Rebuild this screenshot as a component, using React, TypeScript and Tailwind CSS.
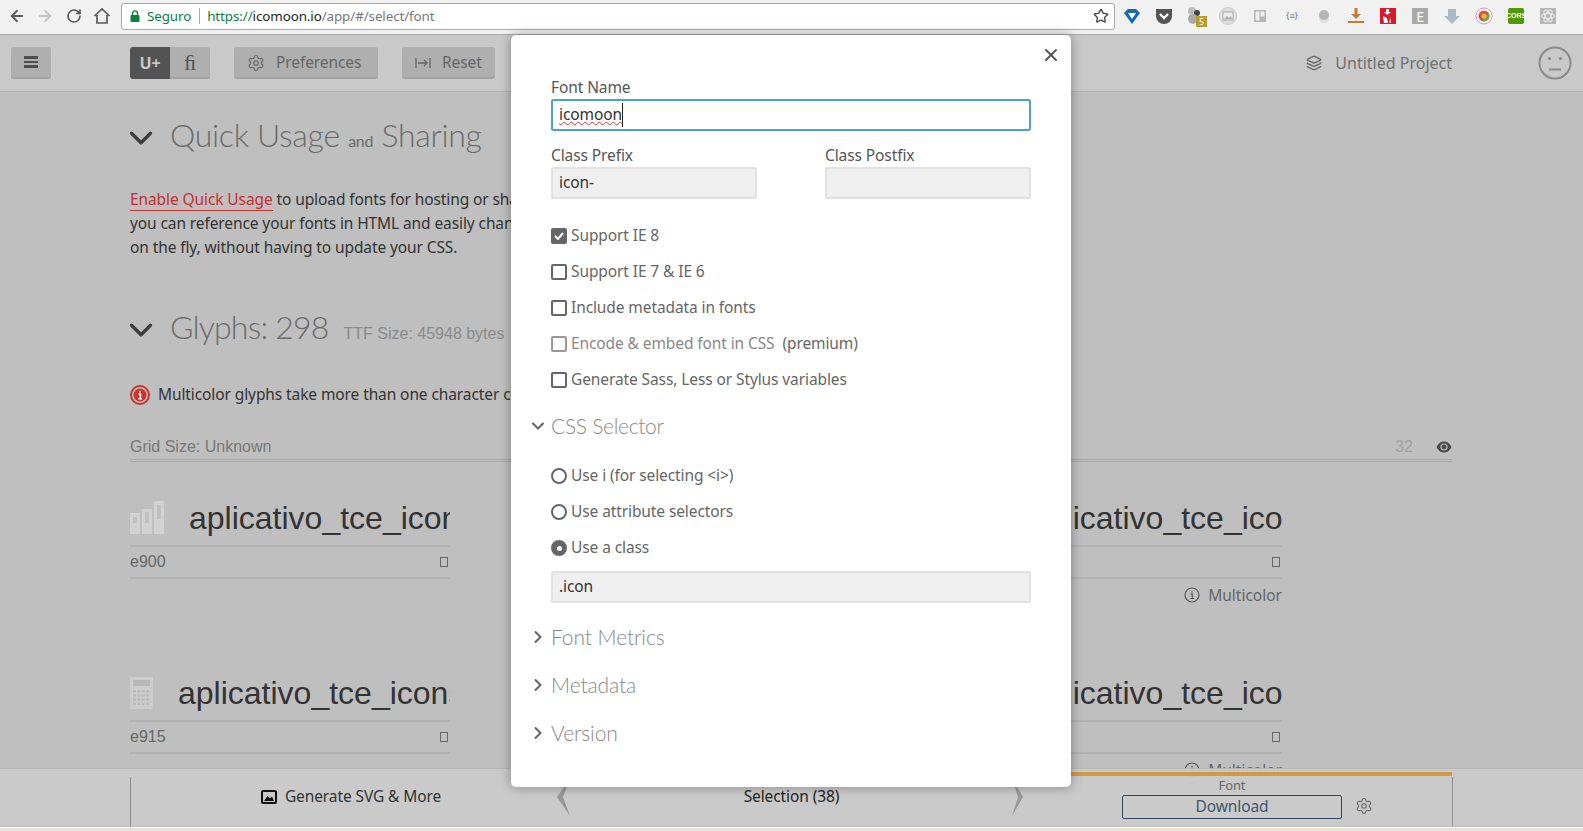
import React, { FC, ReactNode } from "react";
import { ChevronDown, ChevronRight, Layers, Settings, X, ArrowLeft, ArrowRight, RotateCw, Star } from "lucide-react";

const ui = "font-['Noto_Sans',sans-serif] tracking-[-0.1px]";
const title = "font-['Lato',sans-serif] font-light";
const arial = "font-['Liberation_Sans',Arial,sans-serif]";

const ToolButton: FC<{ icon: ReactNode; label: string; className: string }> = ({ icon, label, className }) => (
  <div className={`flex h-[32px] items-center gap-[11px] rounded-[3px] border-b-2 border-[#a2a2a2] bg-[#afafaf] pl-[13px] pt-[2px] text-[15.5px] text-[#666666] ${className}`}>
    {icon}
    <span>{label}</span>
  </div>
);

const ExtensionIcons: FC = () => (
  <div className="ml-[7px] flex items-center gap-[12px]">
    <svg width="20" height="20" viewBox="0 0 20 20">
      <path d="M2 7 L6 3 H14 L18 7 L10 18 Z" fill="#1668b8" />
      <path d="M6 7 H14 L10 13 Z" fill="#ffffff" />
    </svg>
    <svg width="20" height="20" viewBox="0 0 20 20">
      <path d="M2 3 H18 V10 A8 8 0 0 1 2 10 Z" fill="#555555" />
      <path d="M6 8 L10 12 L14 8" stroke="#ffffff" strokeWidth="2.4" fill="none" />
    </svg>
    <div className="relative h-[20px] w-[20px]">
      <div className="absolute left-[2px] top-[1px] h-[8px] w-[8px] rounded-full bg-[#bdbdbd]" />
      <div className="absolute left-[8px] top-[4px] h-[6px] w-[6px] rounded-full bg-[#444444]" />
      <div className="absolute left-[2px] top-[8px] h-[10px] w-[10px] rounded-full bg-[#aaaaaa]" />
      <div className={`absolute left-[10px] top-[10px] h-[11px] w-[11px] bg-[#b89b2a] text-center text-[9px] leading-[11px] text-white ${ui}`}>5</div>
    </div>
    <svg width="20" height="20" viewBox="0 0 20 20">
      <circle cx="10" cy="10" r="8.5" fill="#dddddd" stroke="#cccccc" />
      <rect x="5" y="6" width="10" height="8" fill="#eeeeee" stroke="#aaaaaa" />
      <path d="M6 13 L9 10 L11 12 L13 10 L14 13 Z" fill="#aaaaaa" />
    </svg>
    <svg width="20" height="20" viewBox="0 0 20 20">
      <rect x="4" y="4" width="12" height="12" fill="#b5b5b5" />
      <rect x="5.5" y="5.5" width="4" height="9" fill="#eeeeee" />
      <rect x="10.5" y="5.5" width="4" height="5" fill="#eeeeee" />
    </svg>
    <div className={`w-[20px] text-center text-[9px] leading-[20px] text-[#777777] ${ui}`}>{"{≡}"}</div>
    <svg width="20" height="20" viewBox="0 0 20 20">
      <ellipse cx="10" cy="13" rx="5" ry="4" fill="#dddddd" />
      <circle cx="10" cy="9" r="5" fill="#b5b5b5" />
    </svg>
    <svg width="20" height="20" viewBox="0 0 20 20">
      <path d="M8.5 2 H11.5 V8 H15 L10 13 L5 8 H8.5 Z" fill="#c47a36" />
      <rect x="2" y="15" width="16" height="2" fill="#c47a36" />
    </svg>
    <svg width="20" height="20" viewBox="0 0 20 20">
      <rect x="2" y="2" width="16" height="16" fill="#d8182b" />
      <path d="M8 3 H11 V6 H13 L9.5 9 L6 6 H8 Z M5 10 L9 12 L10 17 H6 Z M12 11 L13 17 H11.5 Z" fill="#ffffff" />
    </svg>
    <div className={`mx-[2px] flex h-[16px] w-[16px] items-center justify-center bg-[#a9a9a9] text-[14px] text-white ${ui}`}>E</div>
    <svg width="20" height="20" viewBox="0 0 20 20">
      <path d="M6 3 H14 V10 H18 L10 18 L2 10 H6 Z" fill="#a7bcc6" />
    </svg>
    <svg width="20" height="20" viewBox="0 0 20 20">
      <circle cx="10" cy="10" r="8" fill="#ffffff" stroke="#d88fc0" />
      <circle cx="10" cy="10" r="5.5" fill="#e0503a" />
      <path d="M10 10 L15 8 A5.5 5.5 0 0 1 8 15 Z" fill="#6ba84f" />
      <circle cx="10" cy="10" r="2.5" fill="#e8b93b" />
    </svg>
    <div className={`mx-[2px] flex h-[16px] w-[16px] items-center justify-center rounded-[2px] bg-[#4d9a06] text-[7px] font-bold text-white ${arial}`}>CORS</div>
    <svg width="20" height="20" viewBox="0 0 20 20">
      <rect x="2" y="2" width="16" height="16" fill="#b5b5b5" />
      <g stroke="#eeeeee" fill="none">
        <ellipse cx="10" cy="10" rx="6.5" ry="2.6" />
        <ellipse cx="10" cy="10" rx="6.5" ry="2.6" transform="rotate(60 10 10)" />
        <ellipse cx="10" cy="10" rx="6.5" ry="2.6" transform="rotate(120 10 10)" />
      </g>
    </svg>
  </div>
);

const ChromeBar: FC = () => (
  <div className="flex h-[35px] items-center border-b border-[#a8a8a8] bg-[#f1f1f1] pb-[2px] pl-[8px]">
    <ArrowLeft size={18} strokeWidth={2.5} className="text-[#5a5a5a]" />
    <ArrowRight size={18} strokeWidth={2.5} className="ml-[10px] text-[#c4c4c4]" />
    <RotateCw size={16} strokeWidth={2.5} className="ml-[12px] text-[#5a5a5a]" />
    <svg width="18" height="18" viewBox="0 0 18 18" className="ml-[11px]" fill="none" stroke="#5a5a5a" strokeWidth="1.7">
      <path d="M1.5 9 L9 2 L16.5 9" />
      <path d="M4 8 V16 H14 V8" />
    </svg>
    <div className="ml-[10px] flex h-[27px] w-[994px] items-center rounded-[3px] border border-[#a9a9a9] bg-white pl-[8px] pr-[5px]">
      <svg width="10" height="12" viewBox="0 0 10 12">
        <path d="M2.5 5 V3.4 A2.5 2.5 0 0 1 7.5 3.4 V5" fill="none" stroke="#0b8043" strokeWidth="1.4" />
        <rect x="0.5" y="5" width="9" height="7" rx="1" fill="#0b8043" />
      </svg>
      <span className={`ml-[7px] text-[13.4px] text-[#0b8043] ${ui}`}>Seguro</span>
      <span className="ml-[8px] h-[16px] w-px bg-[#aaaaaa]" />
      <span className={`ml-[7px] text-[13.4px] text-[#777777] ${ui}`}>
        <span className="text-[#0b8043]">https://</span>
        <span className="text-[#222222]">icomoon.io</span>/app/#/select/font
      </span>
      <Star size={16} strokeWidth={2} className="ml-auto text-[#444444]" />
    </div>
    <ExtensionIcons />
  </div>
);

const AppHeader: FC = () => (
  <div className={`flex h-[57px] items-center border-b border-[#b4b4b4] bg-[#c9c9c9] pl-[11px] ${ui}`}>
    <div className="flex h-[32px] w-[40px] flex-col items-center justify-center gap-[2px] rounded-[3px] border-b-2 border-[#a2a2a2] bg-[#afafaf]">
      <span className="h-[2.5px] w-[14px] bg-[#4e4e4e]" />
      <span className="h-[2.5px] w-[14px] bg-[#4e4e4e]" />
      <span className="h-[2.5px] w-[14px] bg-[#4e4e4e]" />
    </div>
    <div className="ml-[79px] flex h-[32px] w-[80px] overflow-hidden rounded-[3px]">
      <div className="flex w-[40px] items-center justify-center bg-[#535353] text-[16px] font-bold text-[#c9c9c9]">U+</div>
      <div className="flex w-[40px] items-center justify-center border-b-2 border-[#a2a2a2] bg-[#afafaf] font-['Liberation_Serif',serif] text-[22px] text-[#555555]">ﬁ</div>
    </div>
    <ToolButton className="ml-[24px] w-[144px]" label="Preferences" icon={<Settings size={18} strokeWidth={1.5} />} />
    <ToolButton
      className="ml-[24px] w-[93px]"
      label="Reset"
      icon={
        <svg width="16" height="12" viewBox="0 0 16 12" fill="none" stroke="#666666" strokeWidth="1.3">
          <path d="M1 1 V11 M15 1 V11 M3 6 H12 M9 3 L12 6 L9 9" />
        </svg>
      }
    />
    <div className="ml-auto flex items-center text-[16px] tracking-normal text-[#707070]">
      <Layers size={16} strokeWidth={2} className="text-[#666666]" />
      <span className="ml-[13px]">Untitled Project</span>
    </div>
    <svg width="34" height="34" viewBox="0 0 34 34" fill="none" stroke="#8a8a8a" strokeWidth="2" className="ml-[86px] mr-[11px]">
      <circle cx="17" cy="17" r="15.5" />
      <circle cx="11.5" cy="12.5" r="1.6" fill="#8a8a8a" stroke="none" />
      <circle cx="22.5" cy="12.5" r="1.6" fill="#8a8a8a" stroke="none" />
      <path d="M11 23.5 H23" />
    </svg>
  </div>
);

const SectionHeading: FC<{ children: ReactNode; className: string }> = ({ children, className }) => (
  <div className={`flex h-[40px] items-center ${className}`}>
    <ChevronDown size={38} strokeWidth={2.1} className="-ml-[8px] text-[#3d3d3d]" />
    <div className={`ml-[10px] whitespace-nowrap text-[32px] leading-[40px] tracking-[-0.3px] text-[#6b6b6b] ${title}`}>{children}</div>
  </div>
);

const BarsGlyph: FC = () => (
  <svg width="34" height="33" viewBox="0 0 34 33">
    <rect x="0" y="12" width="10" height="21" fill="#d2d2d2" />
    <rect x="12" y="8" width="10" height="25" fill="#d2d2d2" />
    <rect x="24" y="0" width="10" height="33" fill="#d2d2d2" />
    <rect x="3" y="16" width="4" height="6" fill="#bfbfbf" />
    <rect x="15" y="11" width="4" height="11" fill="#bfbfbf" />
    <rect x="27" y="4" width="4" height="14" fill="#bfbfbf" />
  </svg>
);

const CalcGlyph: FC = () => (
  <svg width="23" height="32" viewBox="0 0 23 32">
    <rect width="23" height="32" rx="1" fill="#cdcdcd" />
    <rect x="3" y="3" width="17" height="6" fill="#b8b8b8" />
    {[0, 1, 2, 3].map((r) =>
      [0, 1, 2, 3].map((c) => <rect key={`${r}-${c}`} x={3 + c * 4.4} y={13 + r * 4.2} width="3" height="2.5" fill="#bababa" />),
    )}
  </svg>
);

const GlyphCell: FC<{ icon?: ReactNode; code?: string; pad: string; height?: string; multicolor?: boolean; name?: string }> = ({ icon, code, pad, height, multicolor, name }) => (
  <div className={`w-[320px] ${height ?? ""}`}>
    <div className={`flex h-[57px] items-center overflow-hidden border-b-[2px] border-[#b2b2b2] whitespace-nowrap ${arial}`}>
      {icon && <div className="w-0 overflow-visible">{icon}</div>}
      <span className={`text-[32px] text-[#333333] ${pad}`}>{name ?? "aplicativo_tce_icons-01"}</span>
    </div>
    <div className={`flex h-[32px] items-center justify-between border-b-[2px] border-[#b2b2b2] text-[16px] text-[#666666] ${arial}`}>
      <span>{code}</span>
      <span className="mr-[2px] h-[10px] w-[8px] border border-[#666666]" />
    </div>
    {multicolor && (
      <div className={`flex h-[32px] items-center justify-end gap-[8px] text-[15.5px] tracking-normal text-[#666666] ${ui}`}>
        <svg width="16" height="16" viewBox="0 0 16 16" fill="none" stroke="#555555" strokeWidth="1.2">
          <circle cx="8" cy="8" r="7" />
          <path d="M8 4 V5.5 M6.5 7.2 H8.3 V11.5 M6.5 11.5 H10" />
        </svg>
        Multicolor
      </div>
    )}
  </div>
);

const MainContent: FC = () => (
  <div className="h-full overflow-hidden bg-[#bfbfbf] pl-[130px] pr-[131px]">
    <SectionHeading className="mt-[26px]">
      Quick Usage <span className="text-[16px] font-normal">and</span> Sharing
    </SectionHeading>
    <p className={`mt-[29px] w-[600px] text-[15.5px] leading-[24px] text-[#333333] ${ui}`}>
      <span className="border-b border-[#cc3333] text-[#c62f2f]">Enable Quick Usage</span> to upload fonts for hosting or sharing. Then
      <br />
      you can reference your fonts in HTML and easily change
      <br />
      on the fly, without having to update your CSS.
    </p>
    <SectionHeading className="mt-[51px]">
      <span className="tracking-[-0.8px]">Glyphs: 298</span>
      <span className={`ml-[15px] text-[16px] font-normal tracking-normal text-[#8a8a8a] ${arial}`}>TTF Size: 45948 bytes</span>
    </SectionHeading>
    <div className={`mt-[33px] flex items-center text-[15.5px] text-[#333333] ${ui}`}>
      <svg width="20" height="20" viewBox="0 0 20 20">
        <circle cx="10" cy="10" r="9" fill="none" stroke="#c9332b" strokeWidth="2" />
        <circle cx="10" cy="10" r="6.5" fill="#c9332b" />
        <path d="M10 5.8 V7.4 M8.4 9 H10.4 V13.6 M8.4 13.8 H12" stroke="#ffffff" strokeWidth="1.6" fill="none" />
      </svg>
      <span className="ml-[8px] whitespace-nowrap">Multicolor glyphs take more than one character code</span>
    </div>
    <div className={`mt-[28px] flex h-[28px] items-center justify-between border-b-[3px] border-double border-[#a8a8a8] text-[16px] text-[#777777] ${arial}`}>
      <span>Grid Size: Unknown</span>
      <span className="flex items-center">
        <span className="text-[#a2a2a2]">32</span>
        <svg width="16" height="12" viewBox="0 0 16 12" className="ml-[23px]">
          <path d="M0.5 6 C3 1.5 5.5 0.5 8 0.5 C10.5 0.5 13 1.5 15.5 6 C13 10.5 10.5 11.5 8 11.5 C5.5 11.5 3 10.5 0.5 6 Z" fill="#4a4a4a" />
          <circle cx="8" cy="6" r="3.6" fill="#bfbfbf" />
          <circle cx="8" cy="6" r="2.4" fill="#4a4a4a" />
        </svg>
      </span>
    </div>
    <div className="mt-[28px] grid grid-cols-[320px_320px_320px] gap-x-[96px] gap-y-[50px]">
      <GlyphCell icon={<BarsGlyph />} code="e900" pad="ml-[59px]" height="h-[125px]" />
      <GlyphCell code="e901" pad="" height="h-[125px]" />
      <GlyphCell code="" pad="ml-[68px]" multicolor height="h-[125px]" name="aplicativo_tce_ico" />
      <GlyphCell icon={<CalcGlyph />} code="e915" pad="ml-[48px]" />
      <GlyphCell code="e916" pad="" />
      <GlyphCell code="" pad="ml-[68px]" multicolor name="aplicativo_tce_ico" />
    </div>
  </div>
);

const BottomBar: FC = () => (
  <div className={`absolute bottom-[5px] left-0 right-0 h-[58px] border-t border-[#b4b4b4] bg-[#cacaca]/95 px-[130px] pt-[8px] ${ui}`}>
    <div className="flex h-full border-x border-[#8f8f8f]">
      <div className="flex w-[382px] items-center justify-center gap-[8px] pb-[10px] pl-[58px] text-[15.5px] text-[#333333]">
        <svg width="16" height="14" viewBox="0 0 16 14">
          <rect x="1" y="1" width="14" height="12" rx="1" fill="none" stroke="#111111" strokeWidth="2" />
          <path d="M3 11 L6.5 6 L9 8.5 L11 6.5 L13 11 Z" fill="#111111" />
        </svg>
        Generate SVG &amp; More
      </div>
      <div className="flex flex-1 justify-center pt-[8px] text-[15.5px] text-[#222222]">Selection (38)</div>
      <div className="relative flex w-[382px] flex-col">
        <div className="absolute -top-[5px] left-0 right-0 h-[4px] bg-[#cf9a42]" />
        <div className="ml-[52px] w-[220px] text-center text-[13px] leading-[16px] text-[#666666]">Font</div>
        <div className="mt-[2px] flex w-full pl-[52px]">
          <div className="flex h-[24px] w-[220px] items-center justify-center rounded-[2px] border border-[#2c4560] text-[15.5px] text-[#3f566e]">Download</div>
          <Settings size={18} strokeWidth={1.4} className="ml-[13px] mt-[2px] text-[#666666]" />
        </div>
      </div>
    </div>
    <svg width="22" height="38" viewBox="0 0 22 38" className="absolute left-[556px] top-[9px]">
      <path d="M14 0 L1 19 L14 38 L7 19 Z" fill="#999999" />
    </svg>
    <svg width="22" height="38" viewBox="0 0 22 38" className="absolute left-[1009px] top-[9px]">
      <path d="M3 0 L14 19 L3 38 L9 19 Z" fill="#999999" />
    </svg>
  </div>
);

const TextField: FC<{ value?: string; className: string }> = ({ value, className }) => (
  <div className={`flex h-[32px] items-center rounded-[2px] border-2 border-[#e2e2e2] bg-[#efefef] pl-[6px] text-[15.5px] text-[#333333] ${className}`}>{value}</div>
);

const CheckRow: FC<{ label: ReactNode; checked?: boolean; muted?: boolean }> = ({ label, checked, muted }) => (
  <div className={`flex h-[36px] items-center text-[15.5px] ${muted ? "text-[#888888]" : "text-[#666666]"}`}>
    <span className={`flex h-[16px] w-[16px] items-center justify-center rounded-[2px] border-2 ${muted ? "border-[#999999]" : "border-[#666666]"} ${checked ? "bg-[#666666]" : ""}`}>
      {checked && (
        <svg width="10" height="8" viewBox="0 0 10 8" fill="none" stroke="#ffffff" strokeWidth="2">
          <path d="M1 4 L4 7 L9 1" />
        </svg>
      )}
    </span>
    <span className="ml-[4px] whitespace-nowrap">{label}</span>
  </div>
);

const RadioRow: FC<{ label: string; checked?: boolean }> = ({ label, checked }) => (
  <div className="flex h-[36px] items-center text-[15.5px] text-[#666666]">
    <span className={`flex h-[16px] w-[16px] items-center justify-center rounded-full border-2 border-[#666666] ${checked ? "bg-[#666666]" : ""}`}>
      {checked && <span className="h-[5px] w-[5px] rounded-full bg-white" />}
    </span>
    <span className="ml-[4px]">{label}</span>
  </div>
);

const Collapsed: FC<{ label: string }> = ({ label }) => (
  <div className="relative flex h-[48px] items-center">
    <ChevronRight size={20} strokeWidth={2.5} className="absolute -left-[23px] text-[#666666]" />
    <span className={`text-[21px] text-[#888888] ${title}`}>{label}</span>
  </div>
);

const FontModal: FC = () => (
  <div className={`absolute left-[511px] top-[35px] h-[752px] w-[560px] rounded-[5px] bg-white px-[40px] pt-[41px] shadow-[0_0_12px_rgba(0,0,0,0.35)] ${ui}`}>
    <X size={20} strokeWidth={2.4} className="absolute right-[10px] top-[10px] text-[#555555]" />
    <div className="text-[15.5px] leading-[23px] text-[#555555]">Font Name</div>
    <div className="flex h-[32px] items-center rounded-[2px] border-2 border-[#4ba0dc] pl-[6px] text-[15.5px] text-[#333333]">
      <span className="border-r border-[#222222] underline decoration-[#e03030] decoration-wavy decoration-1">icomoon</span>
    </div>
    <div className="mt-[13px] flex justify-between">
      <div className="w-[206px]">
        <div className="text-[15.5px] leading-[23px] text-[#555555]">Class Prefix</div>
        <TextField value="icon-" className="" />
      </div>
      <div className="w-[206px]">
        <div className="text-[15.5px] leading-[23px] text-[#555555]">Class Postfix</div>
        <TextField className="" />
      </div>
    </div>
    <div className="mt-[19px]">
      <CheckRow label="Support IE 8" checked />
      <CheckRow label="Support IE 7 & IE 6" />
      <CheckRow label="Include metadata in fonts" />
      <CheckRow label={<>Encode &amp; embed font in CSS <span className="ml-[4px] text-[#666666]">(premium)</span></>} muted />
      <CheckRow label="Generate Sass, Less or Stylus variables" />
    </div>
    <div className="relative mt-[4px] flex h-[48px] items-center">
      <ChevronDown size={20} strokeWidth={2.5} className="absolute -left-[23px] text-[#666666]" />
      <span className={`text-[21px] tracking-[-0.3px] text-[#888888] ${title}`}>CSS Selector</span>
    </div>
    <div className="mt-[8px]">
      <RadioRow label="Use i (for selecting <i>)" />
      <RadioRow label="Use attribute selectors" />
      <RadioRow label="Use a class" checked />
    </div>
    <TextField value=".icon" className="mt-[5px]" />
    <div className="mt-[10px]">
      <Collapsed label="Font Metrics" />
      <Collapsed label="Metadata" />
      <Collapsed label="Version" />
    </div>
  </div>
);

export default function App() {
  return (
    <div className="relative flex h-[831px] w-[1583px] flex-col overflow-hidden bg-[#e6e3d8]">
      <ChromeBar />
      <AppHeader />
      <div className="h-[735px]">
        <MainContent />
      </div>
      <div className="h-[4px] border-t border-white bg-[#e6e3d8]" />
      <BottomBar />
      <FontModal />
    </div>
  );
}
